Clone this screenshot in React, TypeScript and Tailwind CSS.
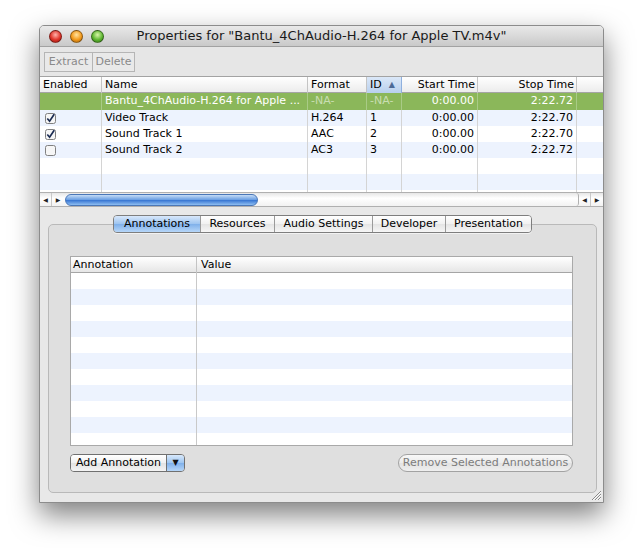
import React from "react";

type Track = {
  selected?: boolean;
  checked?: boolean;
  name: string;
  format: string;
  id: string;
  start: string;
  stop: string;
};

const tracks: Track[] = [
  { selected: true, name: "Bantu_4ChAudio-H.264 for Apple ...", format: "-NA-", id: "-NA-", start: "0:00.00", stop: "2:22.72" },
  { checked: true, name: "Video Track", format: "H.264", id: "1", start: "0:00.00", stop: "2:22.70" },
  { checked: true, name: "Sound Track 1", format: "AAC", id: "2", start: "0:00.00", stop: "2:22.70" },
  { checked: false, name: "Sound Track 2", format: "AC3", id: "3", start: "0:00.00", stop: "2:22.72" },
];

const cols = "grid grid-cols-[62px_206px_59px_35px_76px_99px_25px]";

const Checkbox: React.FC<{ checked: boolean }> = ({ checked }) => (
  <svg width="11" height="11" viewBox="0 0 11 11">
    <rect x="0.5" y="0.5" width="10" height="10" rx="2" fill="#f6f6f6" stroke="#808080" />
    {checked && <path d="M2.3 5.5 L4.6 8.2 L9.2 1.2" fill="none" stroke="#1a2b52" strokeWidth="1.7" />}
  </svg>
);

const Light: React.FC<{ cls: string }> = ({ cls }) => (
  <div className={`w-[13px] h-[13px] rounded-full border border-black/40 ${cls}`} />
);

const Arrows: React.FC = () => (
  <div className="flex h-full">
    <div className="w-[12px] flex items-center justify-center border-r border-[#c8c8c8] text-[6px] text-[#222]">◀</div>
    <div className="w-[12px] flex items-center justify-center text-[6px] text-[#222]">▶</div>
  </div>
);

const TrackTable: React.FC = () => {
  const blank = [4, 5];
  return (
    <div className="h-[115px] bg-white overflow-hidden">
      <div className={`${cols} h-[16px] border-b border-[#a5a5a5] bg-[linear-gradient(#ffffff,#ececec)] text-[11px] leading-[16px] text-black`}>
        <div className="pl-[3px] border-r border-[#c4c4c4]">Enabled</div>
        <div className="pl-[3px] border-r border-[#c4c4c4]">Name</div>
        <div className="pl-[3px] border-r border-[#c4c4c4]">Format</div>
        <div className="pl-[3px] pr-[6px] flex items-center justify-between border-r border-[#8fb0de] bg-[linear-gradient(#dbe8f8,#b8d0ee)]">
          <span>ID</span>
          <span className="text-[8px] text-[#4d6a96]">▲</span>
        </div>
        <div className="pr-[2px] text-right border-r border-[#c4c4c4]">Start Time</div>
        <div className="pr-[2px] text-right border-r border-[#c4c4c4]">Stop Time</div>
        <div />
      </div>
      {tracks.map((t, i) => {
        const bg = t.selected ? "bg-[#8bb75a] text-white" : i % 2 === 1 ? "bg-[#edf3fe] text-black" : "bg-white text-black";
        const line = t.selected ? "border-[#a9cb86]" : "border-[#d4d4d4]";
        const na = t.selected ? "text-[#c9deb2]" : "";
        return (
          <div key={i} className={`${cols} ${t.selected ? "h-[17px]" : "h-[16px]"} ${bg} text-[11px] leading-[16px]`}>
            <div className={`pl-[5px] flex items-center border-r ${line}`}>
              {!t.selected && <Checkbox checked={!!t.checked} />}
            </div>
            <div className={`pl-[3px] border-r ${line} whitespace-nowrap overflow-hidden`}>{t.name}</div>
            <div className={`pl-[3px] border-r ${line} ${na}`}>{t.format}</div>
            <div className={`pl-[3px] border-r ${line} ${na}`}>{t.id}</div>
            <div className={`pr-[3px] text-right border-r ${line}`}>{t.start}</div>
            <div className={`pr-[3px] text-right border-r ${line}`}>{t.stop}</div>
            <div />
          </div>
        );
      })}
      {blank.map((i) => (
        <div key={i} className={`${cols} h-[16px] ${i % 2 === 1 ? "bg-[#edf3fe]" : "bg-white"}`}>
          {[0, 1, 2, 3, 4, 5].map((c) => (
            <div key={c} className="border-r border-[#d4d4d4]" />
          ))}
          <div />
        </div>
      ))}
      <div className={`${cols} h-[4px] bg-white`}>
        {[0, 1, 2, 3, 4, 5].map((c) => (
          <div key={c} className="border-r border-[#d4d4d4]" />
        ))}
        <div />
      </div>
    </div>
  );
};

const tabs = ["Annotations", "Resources", "Audio Settings", "Developer", "Presentation"];
const tabW = ["w-[86px]", "w-[74px]", "w-[98px]", "w-[73px]", "w-[86px]"];

const AnnotationTable: React.FC = () => (
  <div className="border border-[#a9a9a9] bg-white h-[190px] overflow-hidden">
    <div className="grid grid-cols-[126px_1fr] h-[16px] border-b border-[#a5a5a5] bg-[linear-gradient(#ffffff,#e6e6e6)] text-[11px] leading-[16px] text-black">
      <div className="pl-[2px] border-r border-[#c4c4c4]">Annotation</div>
      <div className="pl-[4px]">Value</div>
    </div>
    {Array.from({ length: 11 }).map((_, i) => (
      <div key={i} className={`grid grid-cols-[126px_1fr] h-[16px] ${i % 2 === 1 ? "bg-[#edf3fe]" : "bg-white"}`}>
        <div className="border-r border-[#c9c9c9]" />
        <div />
      </div>
    ))}
  </div>
);

export default function App() {
  return (
    <div className="w-[644px] h-[558px] bg-white pt-[25px] pl-[39px] font-['DejaVu_Sans',sans-serif]">
      <div className="w-[565px] h-[478px] flex flex-col border border-[#8c8c8c] rounded-t-[5px] bg-[#e8e8e8] shadow-[0_12px_28px_rgba(0,0,0,0.5)]">
        {/* title bar */}
        <div className="relative h-[21px] flex items-center rounded-t-[4px] bg-[linear-gradient(#e9e9e9,#c9c9c9)] border-b border-[#a2a2a2]">
          <div className="flex gap-[8px] pl-[9px]">
            <Light cls="bg-[radial-gradient(circle_at_50%_35%,#ffb3ab,#e0352a_55%,#8e150e)]" />
            <Light cls="bg-[radial-gradient(circle_at_50%_35%,#ffe3a0,#f39a1c_55%,#9b5a08)]" />
            <Light cls="bg-[radial-gradient(circle_at_50%_35%,#d9f5a9,#5fb832_55%,#2f6d12)]" />
          </div>
          <div className="absolute inset-0 flex items-center justify-center text-[13px] text-[#1a1a1a] pointer-events-none">
            Properties for "Bantu_4ChAudio-H.264 for Apple TV.m4v"
          </div>
        </div>
        {/* toolbar */}
        <div className="h-[30px] pl-[4px] pt-[5px] bg-[#e6e6e6] border-b border-[#a3a3a3]">
          <div className="flex h-[20px] border border-[#b5b5b5] w-[91px] bg-[#e9e9e9] text-[11px] text-[#8a8a8a]">
            <div className="w-[48px] flex items-center justify-center border-r border-[#b5b5b5]">Extract</div>
            <div className="flex-1 flex items-center justify-center">Delete</div>
          </div>
        </div>
        <TrackTable />
        {/* horizontal scroller */}
        <div className="h-[15px] flex items-stretch border-t border-[#b0b0b0] bg-[linear-gradient(#e6e6e6,#ffffff_40%,#f2f2f2)] border-b border-[#9d9d9d]">
          <Arrows />
          <div className="flex-1 flex items-center pl-[1px]">
            <div className="w-[193px] h-[12px] rounded-full border border-[#4a77b8] bg-[linear-gradient(#c5dcf6,#6fa2e4_45%,#3b79d4_55%,#8ebef2)]" />
          </div>
          <div className="w-[3px] rounded-r-full border-r border-[#b0b0b0]" />
          <Arrows />
        </div>
        {/* lower panel */}
        <div className="relative flex-1 pt-[8px] pl-[8px] pr-[6px] flex flex-col">
          <div className="relative z-10 flex justify-center">
            <div className="flex h-[18px] rounded-[4px] border border-[#7e7e7e] overflow-hidden text-[11px] text-black shadow-[0_1px_0_rgba(255,255,255,0.6)]">
              {tabs.map((t, i) => (
                <div
                  key={t}
                  className={`${tabW[i]} flex items-center justify-center ${i > 0 ? "border-l border-[#9a9a9a]" : ""} ${
                    i === 0
                      ? "bg-[linear-gradient(#d8e8fb,#9cc4f0_50%,#7fb0ea_51%,#b6d6f8)]"
                      : "bg-[linear-gradient(#ffffff,#f1f1f1_50%,#e4e4e4_51%,#f6f6f6)]"
                  }`}
                >
                  {t}
                </div>
              ))}
            </div>
          </div>
          <div className="-mt-[9px] h-[269px] rounded-[5px] border border-[#b9b9b9] bg-[#dfdfdf] pt-[31px] pl-[21px] pr-[23px] flex flex-col">
            <AnnotationTable />
            <div className="mt-[8px] flex justify-between items-center">
              <div className="flex h-[18px] rounded-[4px] border border-[#707070] overflow-hidden text-[11px] text-black">
                <div className="w-[96px] flex items-center justify-center bg-[linear-gradient(#ffffff,#f0f0f0_50%,#e2e2e2_51%,#f4f4f4)] border-r border-[#707070]">
                  Add Annotation
                </div>
                <div className="w-[17px] flex items-center justify-center text-[8px] text-[#111] bg-[linear-gradient(#d8e8fb,#9cc4f0_50%,#7fb0ea_51%,#b6d6f8)]">
                  ▼
                </div>
              </div>
              <div className="w-[175px] h-[18px] rounded-full border border-[#a2a2a2] flex items-center justify-center text-[11px] text-[#7c7c7c] bg-[linear-gradient(#f8f8f8,#ececec_50%,#e2e2e2_51%,#efefef)]">
                Remove Selected Annotations
              </div>
            </div>
          </div>
          <svg className="absolute right-[1px] bottom-[1px]" width="12" height="12" viewBox="0 0 12 12">
            <path d="M11 2 L2 11 M11 5 L5 11 M11 8 L8 11" stroke="#8a8a8a" strokeWidth="1" />
            <path d="M11 3 L3 11 M11 6 L6 11 M11 9 L9 11" stroke="#fafafa" strokeWidth="1" />
          </svg>
        </div>
      </div>
    </div>
  );
}
